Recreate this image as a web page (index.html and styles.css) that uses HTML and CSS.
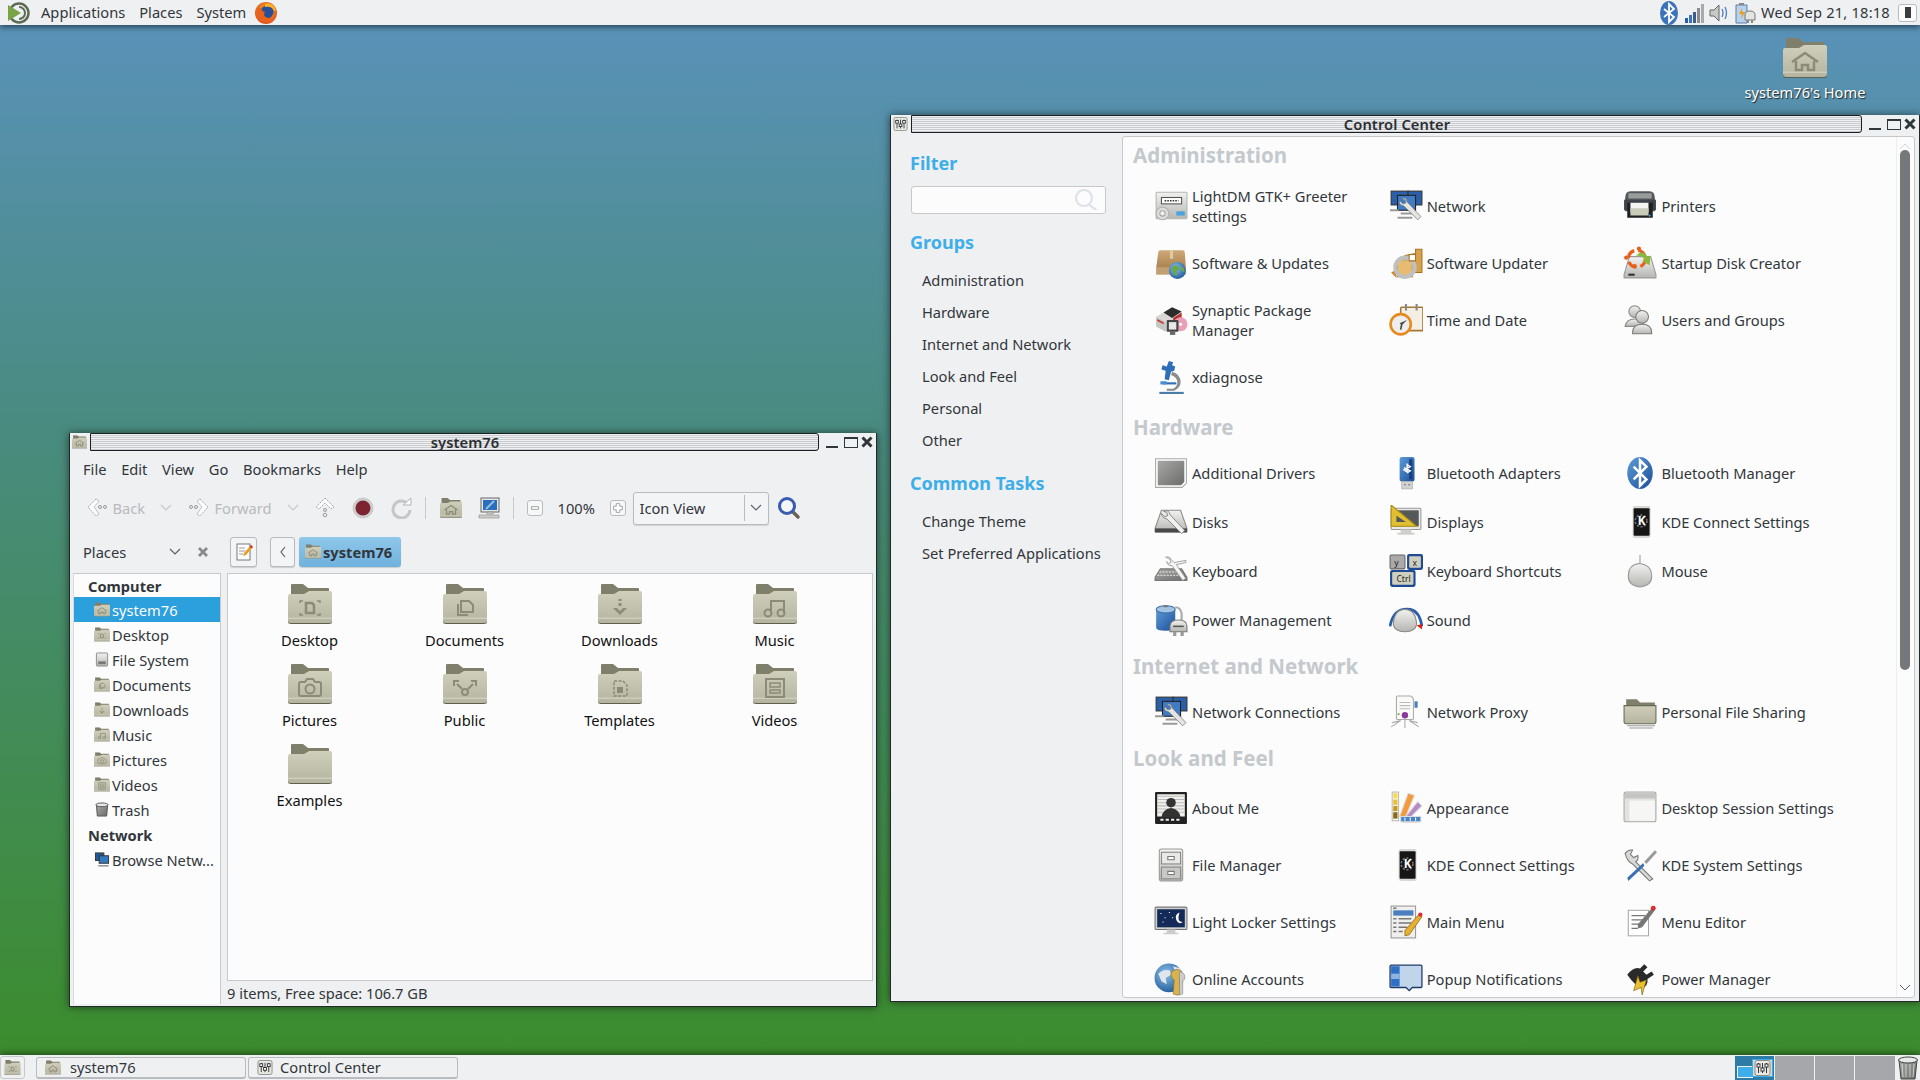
FILE: index.html
```html
<!DOCTYPE html>
<html lang="en">
  <head>
    <meta charset="UTF-8" />
    <title>Desktop</title>
    <link rel="stylesheet" href="styles.css">
  </head>
  <body>
    <svg class="defs" xmlns="http://www.w3.org/2000/svg">
      <defs>
        <linearGradient id="gFolder" x1="0" y1="0" x2="0" y2="1"><stop offset="0" stop-color="#cfcfbc"/><stop offset="1" stop-color="#b4b4a0"/></linearGradient>
        <linearGradient id="gSteel" x1="0" y1="0" x2="0" y2="1"><stop offset="0" stop-color="#f2f2f0"/><stop offset="1" stop-color="#b5b5b2"/></linearGradient>
        <linearGradient id="gDark" x1="0" y1="0" x2="1" y2="1"><stop offset="0" stop-color="#a8a8a6"/><stop offset="1" stop-color="#6c6c6a"/></linearGradient>
        <linearGradient id="gBlue" x1="0" y1="0" x2="1" y2="1"><stop offset="0" stop-color="#5c9bd8"/><stop offset="1" stop-color="#1d4f98"/></linearGradient>
        <linearGradient id="gBox" x1="0" y1="0" x2="0" y2="1"><stop offset="0" stop-color="#cfa878"/><stop offset="1" stop-color="#a98252"/></linearGradient>
        <radialGradient id="gGlobe" cx=".4" cy=".35" r=".7"><stop offset="0" stop-color="#8fc0e6"/><stop offset="1" stop-color="#1f5c9c"/></radialGradient>
        <radialGradient id="gFox" cx=".5" cy=".4" r=".6"><stop offset="0" stop-color="#f6b02a"/><stop offset="1" stop-color="#dd4f1c"/></radialGradient>

        <symbol id="folder" viewBox="0 0 44 40">
          <path d="M3 1q0-1 1-1h11l5 4h20q1 0 1 1v14H3z" fill="#7f7f6b"/>
          <path d="M0 12q0-2 2-2h14l5-3h21q2 0 2 2v27q0 3-3 3H3q-3 0-3-3z" fill="url(#gFolder)"/>
          <path d="M0 36q0 3 3 3h38q3 0 3-3v1.500q0 2.500-3 2.500H3q-3 0-3-2.500z" fill="#5f5f4e"/>
          <path d="M0 33.500h44v1.500H0z" fill="#dcdccc" opacity=".6"/>
        </symbol>
        <symbol id="f-home" viewBox="0 0 44 40"><use href="#folder"/><path d="M9 24l13-9 13 9M13 23v9h6v-5h6v5h6v-9" fill="none" stroke="#8b8b77" stroke-width="2.500"/></symbol>
        <symbol id="f-desktop" viewBox="0 0 44 40"><use href="#folder"/><path d="M12 19v-2h3M32 19v-2h-3M12 29v2h3M32 29v2h-3" fill="none" stroke="#8b8b77" stroke-width="1.500"/><path d="M18 19h6l2 2v8h-8z" fill="none" stroke="#8b8b77" stroke-width="2.500"/></symbol>
        <symbol id="f-documents" viewBox="0 0 44 40"><path d="M0 0" /><use href="#folder"/><path d="M15 20v11h10M18 17v11h12V21l-4-4z" fill="none" stroke="#8b8b77" stroke-width="2"/></symbol>
        <symbol id="f-downloads" viewBox="0 0 44 40"><use href="#folder"/><path d="M22 15v2M22 19v3" stroke="#8b8b77" stroke-width="3"/><path d="M15 24l7 7 7-7h-4l-3 3-3-3z" fill="#8b8b77"/></symbol>
        <symbol id="f-music" viewBox="0 0 44 40"><use href="#folder"/><path d="M18 29V17h13v12" fill="none" stroke="#8b8b77" stroke-width="2"/><circle cx="15" cy="29" r="3.500" fill="none" stroke="#8b8b77" stroke-width="2"/><circle cx="28" cy="29" r="3.500" fill="none" stroke="#8b8b77" stroke-width="2"/></symbol>
        <symbol id="f-pictures" viewBox="0 0 44 40"><use href="#folder"/><path d="M11 20q0-2 2-2h4l2-3h6l2 3h4q2 0 2 2v10q0 2-2 2H13q-2 0-2-2z" fill="none" stroke="#8b8b77" stroke-width="2"/><circle cx="22" cy="25" r="4.500" fill="none" stroke="#8b8b77" stroke-width="2"/></symbol>
        <symbol id="f-public" viewBox="0 0 44 40"><use href="#folder"/><circle cx="22" cy="28" r="3" fill="none" stroke="#8b8b77" stroke-width="2"/><path d="M19 25l-5-5M25 25l5-5M11 22v-5h5M33 22v-5h-5" fill="none" stroke="#8b8b77" stroke-width="2"/></symbol>
        <symbol id="f-templates" viewBox="0 0 44 40"><use href="#folder"/><path d="M16 17h9l4 4v11H16z" fill="none" stroke="#8b8b77" stroke-width="1.500" stroke-dasharray="3 1.500"/><path d="M19 23h6v6h-6z" fill="#8b8b77"/></symbol>
        <symbol id="f-videos" viewBox="0 0 44 40"><use href="#folder"/><path d="M13 15h18v18H13z" fill="none" stroke="#8b8b77" stroke-width="2"/><path d="M17 19h10v4H17zM17 26h10v3H17z" fill="none" stroke="#8b8b77" stroke-width="1.500"/></symbol>

        <symbol id="s-filesystem" viewBox="0 0 16 16"><rect x="2" y="1" width="12" height="14" rx="1" fill="url(#gSteel)" stroke="#8a8a88"/><path d="M4 10h8v3H4z" fill="#777"/></symbol>
        <symbol id="s-trash" viewBox="0 0 16 16"><path d="M2 3h12l-1 12H3z" fill="url(#gDark)" stroke="#555"/><ellipse cx="8" cy="3" rx="6.500" ry="2" fill="#e8e8e6" stroke="#555"/></symbol>
        <symbol id="s-network" viewBox="0 0 16 16"><rect x="1" y="1" width="9" height="8" fill="#1f5c9c" stroke="#333"/><rect x="5" y="4" width="10" height="8" fill="#3478c0" stroke="#333"/><path d="M4 14h11v1.500H4z" fill="#888"/></symbol>
        <symbol id="s-control" viewBox="0 0 16 16"><rect x=".5" y=".5" width="15" height="15" rx="2" fill="#e8e8e4" stroke="#8c8c86"/><path d="M4 3v10M8 3v10M12 3v10" stroke="#333"/><rect x="2.500" y="4" width="3" height="3" fill="#fff" stroke="#333"/><rect x="6.500" y="8" width="3" height="3" fill="#fff" stroke="#333"/><rect x="10.500" y="4" width="3" height="3" fill="#fff" stroke="#333"/></symbol>

        <symbol id="a-lightdm" viewBox="0 0 32 32"><rect x="2" y="3" width="29" height="25" rx="1" fill="url(#gSteel)" stroke="#b5b5b2"/><rect x="7" y="8" width="19" height="6" fill="#fff" stroke="#555"/><path d="M10 11h13" stroke="#333" stroke-width="1.500" stroke-dasharray="1.500 1"/><rect x="21" y="21" width="8" height="4" fill="#4aa3df"/><circle cx="8" cy="23" r="6" fill="#dcdcda" stroke="#b0b0ae"/><circle cx="8" cy="23" r="2.500" fill="#f2f2f0" stroke="#a8a8a6"/></symbol>
        <symbol id="a-software" viewBox="0 0 32 32"><path d="M4 6q0-2 2-2h21q2 0 2 2l1 15H2z" fill="url(#gBox)"/><path d="M2 20h28v7H2z" fill="#c2a072"/><path d="M15 4h3v8h-3z" fill="#e0c8a4"/><circle cx="22" cy="23" r="8" fill="url(#gGlobe)"/><path d="M17 20q3-3 6-1l1 3-3 2 1 4-3-1-2-4zM25 19l3 2 1 4-3-2z" fill="#6aa84a"/></symbol>
        <symbol id="a-synaptic" viewBox="0 0 32 32"><path d="M2 13L16 5l10 4v10L12 27 2 22z" fill="#d8d8d6"/><path d="M9 9l8-5 9 4-9 6z" fill="#2c2c2c"/><path d="M2 13l9 5v9l-9-5z" fill="#c6c6c4"/><path d="M18 14l8-5v7l-8 4z" fill="#b83232"/><path d="M3 15l6 3v2l-6-3z" fill="#c83c3c"/><circle cx="25" cy="20" r="6.500" fill="#e8a0b8"/><circle cx="25" cy="20" r="1.500" fill="#fff"/><rect x="12" y="16" width="11" height="11" rx="1" fill="#444"/><rect x="14" y="18" width="7" height="7" fill="#e8e8e6"/><path d="M15 27h5v3h-5z" fill="#666"/></symbol>
        <symbol id="a-xdiag" viewBox="0 0 32 32"><path d="M5 30h23v2H5z" fill="#4a7ea8"/><path d="M17 11q8 2 8 10 0 5-6 8h-7v-2h6q4-2 4-6 0-5-6-7z" fill="#8c8c8a"/><path d="M14 1l4 1-1 3 3 1-1 4-3 1-2 8-4-1 1-8-4-1 1-4 4 1z" fill="#2e6fb8"/><path d="M8 21h13v2H8z" fill="#2e6fb8"/><path d="M6 20h6v3H6z" fill="#4a90d0"/></symbol>
        <symbol id="a-network" viewBox="0 0 32 32"><rect x="2" y="2" width="16" height="13" fill="#2b5fa8" stroke="#333"/><rect x="18" y="2" width="13" height="13" fill="#2b5fa8" stroke="#333"/><rect x="8" y="6" width="17" height="14" fill="#3f7cc4" stroke="#222"/><path d="M1 19h8v2H1zM11 22h12v2H11zM8 26h14v2H8z" fill="#9a9a98"/><path d="M12 9q4-2 5 3l13 14-3 3-13-13q-5-1-4-5l3 3 3-1-1-3z" fill="#e4e4e2" stroke="#777" stroke-width=".7"/></symbol>
        <symbol id="a-updater" viewBox="0 0 32 32"><path d="M15 9l10-2V3h6v22h-8z" fill="#d8a24c" stroke="#a87420"/><path d="M8 13h14v16H8z" fill="#e8bc70" stroke="#a87420"/><path d="M2 25l5-3v8z" fill="#c88a30"/><circle cx="15" cy="20" r="9" fill="none" stroke="#c0c0be" stroke-width="4"/><path d="M19 8h6v6h-6z" fill="#fff" stroke="#a87420"/></symbol>
        <symbol id="a-time" viewBox="0 0 32 32"><rect x="11" y="4" width="21" height="22" rx="1" fill="#f4efe2" stroke="#a87830" stroke-width="1.500"/><path d="M16 1v6M26 1v6" stroke="#888" stroke-width="2"/><circle cx="11" cy="20" r="9.500" fill="#eee" stroke="#e58a1f" stroke-width="2.500"/><path d="M12 21l5-5-7 3z" fill="#444"/><path d="M12 20l-1 5" stroke="#444" stroke-width="1.500"/></symbol>
        <symbol id="a-printer" viewBox="0 0 32 32"><path d="M2 9q0-7 5-7h18q5 0 5 7v12H2z" fill="#54585c"/><path d="M5 4h22v5H5z" fill="#9a9c9c"/><path d="M1 10h30v10H1z" fill="#40444a"/><path d="M4 13h24v14H4z" fill="#1e2022"/><path d="M7 13h17v9H7z" fill="#f4f4f2"/><path d="M7 18h17v7H7z" fill="#c8ccb8"/><circle cx="25" cy="25" r="1" fill="#4aa3df"/></symbol>
        <symbol id="a-startup" viewBox="0 0 32 32"><path d="M6 10h20l5 17v3H1v-3z" fill="url(#gSteel)" stroke="#9a9a98"/><path d="M5 26h6v2H5z" fill="#333"/><circle cx="13" cy="12" r="8" fill="none" stroke="#e85e1c" stroke-width="3" stroke-dasharray="9 4"/><circle cx="15" cy="2.500" r="2" fill="#e85e1c"/><circle cx="3" cy="11" r="2" fill="#e85e1c"/><circle cx="11" cy="19" r="2" fill="#e85e1c"/><path d="M12 9q7-6 11 1l3-1-1 9-7-4 3-1q-3-4-9-4z" fill="#8ab83c"/></symbol>
        <symbol id="a-users" viewBox="0 0 32 32"><circle cx="11" cy="8" r="5.500" fill="url(#gSteel)" stroke="#8a8a88"/><path d="M2 22q1-7 9-7t9 7z" fill="url(#gSteel)" stroke="#8a8a88"/><circle cx="18" cy="13" r="6" fill="url(#gSteel)" stroke="#7a7a78"/><path d="M9 28q0-8 9-8t9 8v1H9z" fill="url(#gSteel)" stroke="#7a7a78"/></symbol>
        <symbol id="a-drivers" viewBox="0 0 32 32"><path d="M1.500 2.500h29v23l-4 4h-25z" fill="#fff" stroke="#a8a8a6"/><path d="M3.500 4.500h25v20l-3 3h-22z" fill="url(#gDark)"/></symbol>
        <symbol id="a-btadapter" viewBox="0 0 32 32"><rect x="10" y="1" width="14" height="23" rx="2" fill="url(#gBlue)"/><rect x="19" y="3" width="3" height="19" fill="#1a3f80"/><path d="M17 7v8l-3-2 6-3-3-2m0 8l3-2-6-3" fill="none" stroke="#fff" stroke-width="1.300"/><rect x="12" y="24" width="10" height="7" fill="#d2d2d0" stroke="#aaa" stroke-width=".6"/><path d="M14 27h2M18 27h2" stroke="#777"/></symbol>
        <symbol id="a-btmgr" viewBox="0 0 32 32"><ellipse cx="16" cy="16" rx="12" ry="15" fill="url(#gBlue)"/><path d="M10 10l12 12-6 6V4l6 6-12 12" fill="none" stroke="#fff" stroke-width="2.400"/></symbol>
        <symbol id="a-kde" viewBox="0 0 32 32"><rect x="9" y="1" width="17" height="30" rx="2" fill="#d8d8d6"/><rect x="10" y="3" width="15" height="26" rx="1" fill="#161616"/><circle cx="17" cy="15" r="5.500" fill="none" stroke="#777" stroke-width="1.500" stroke-dasharray="2 1.500"/><text class="svg-k" x="17.500" y="19">K</text></symbol>
        <symbol id="a-disks" viewBox="0 0 32 32"><path d="M7 5h18l6 17v3H1v-3z" fill="url(#gSteel)" stroke="#8a8a88"/><path d="M1 22h30v4H1z" fill="#48484a"/><path d="M9 6q5-2 6 3l14 15-3 3L12 13q-5-1-5-5l3 3 3-1-1-3z" fill="#f0f0ee" stroke="#777" stroke-width=".8"/></symbol>
        <symbol id="a-displays" viewBox="0 0 32 32"><rect x="2" y="3" width="28" height="20" rx="1" fill="#e8e8e6" stroke="#999"/><rect x="4" y="5" width="24" height="15" fill="#55585a"/><path d="M11 23h10v3H11zM8 26h16v2H8z" fill="#cfcfcd"/><path d="M2 0l0 20h24z" fill="#e0c030" stroke="#a88c10"/><path d="M7 10l0 6h9z" fill="#55585a"/></symbol>
        <symbol id="a-keyboard" viewBox="0 0 32 32"><path d="M6 14h20l5 8v3H1v-3z" fill="url(#gDark)" stroke="#777"/><path d="M5 17h20M3 20h25" stroke="#e8e8e6" stroke-dasharray="2 1"/><path d="M11 3q4-1 5 2l3 3 11-2v2l-9 2 9 13-3 2-10-14q-5 0-5-4l2 2 2-1-1-3z" fill="#f4f4f2" stroke="#888" stroke-width=".7"/></symbol>
        <symbol id="a-shortcuts" viewBox="0 0 32 32"><rect x="1" y="15" width="24" height="16" rx="2" fill="#1f4a94"/><rect x="3" y="17" width="20" height="12" rx="1" fill="#cfcfbf"/><text class="svg-key" x="7" y="26">Ctrl</text><rect x="1" y="1" width="14" height="13" rx="1" fill="#aaa" stroke="#666"/><text class="svg-key" x="5" y="11">y</text><rect x="17" y="0" width="15" height="15" rx="2" fill="#1f4a94"/><rect x="19" y="2" width="11" height="11" rx="1" fill="#cfcfbf"/><text class="svg-key" x="22" y="11">x</text></symbol>
        <symbol id="a-mouse" viewBox="0 0 32 32"><path d="M16 1v8" stroke="#999" fill="none"/><path d="M15 9q-10 1-10 12 0 9 11 10 11-1 11-10 0-11-12-12z" fill="url(#gSteel)" stroke="#999"/></symbol>
        <symbol id="a-power" viewBox="0 0 32 32"><path d="M2 6v17q0 3 9 3t9-3V6z" fill="url(#gBlue)"/><ellipse cx="11" cy="6" rx="9" ry="3.500" fill="#a4c2e2" stroke="#3a6ea8"/><path d="M9 2h4v2H9z" fill="#777"/><path d="M20 4q5 0 6 6v8" fill="none" stroke="#aaa" stroke-width="2"/><path d="M15 22q0-6 8-6t8 6v5H15z" fill="url(#gSteel)" stroke="#777"/><path d="M18 27h3v4h-3zM25 27h3v4h-3z" fill="#999"/><path d="M18 22h10" stroke="#555" stroke-width="1.500"/></symbol>
        <symbol id="a-sound" viewBox="0 0 32 32"><path d="M1 22Q4 4 20 6q9 2 11 16" fill="none" stroke="#2a5ea8" stroke-width="2.500"/><path d="M26 21l5-1 0 5z" fill="#e01818"/><path d="M4 20q1-14 11-14t11 14q-1 7-11 7T4 20z" fill="url(#gSteel)" stroke="#888"/></symbol>
        <symbol id="a-proxy" viewBox="0 0 32 32"><path d="M7 2q0-1 1-1h12q3 1 3 4v17q0 1-1 1H8q-1 0-1-1z" fill="#fafaf8" stroke="#aaa"/><path d="M10 7h10M10 10h10M10 13h10" stroke="#bbb"/><path d="M24 6h3v6h-3z" fill="#4a80c0"/><circle cx="15" cy="19" r="3" fill="#8a3a9a"/><path d="M15 22v9M11 24l-9 6M19 24l9 6M3 26l8-2M27 26l-8-2" stroke="#aaa"/><circle cx="9" cy="18" r="1" fill="#7ab050"/></symbol>
        <symbol id="a-sharing" viewBox="0 0 32 32"><path d="M3 4h10l3 3h14v12H3z" fill="#7f7f6b"/><path d="M1 10h30v15q0 2-2 2H3q-2 0-2-2z" fill="url(#gFolder)" stroke="#6a6a58"/><path d="M4 29h26M6 31h22" stroke="#999"/></symbol>
        <symbol id="a-about" viewBox="0 0 32 32"><rect x="1" y="1" width="30" height="30" rx="1" fill="#222"/><path d="M3 3h26v21H3z" fill="#f0f0ee"/><path d="M3 5h26M3 8h26M3 11h26M3 14h26M3 17h26M3 20h26" stroke="#bbb"/><circle cx="16" cy="11" r="4.500" fill="#333"/><path d="M7 25q1-8 9-9 8 1 9 9z" fill="#333"/><path d="M6 27h20" stroke="#eee" stroke-width="2" stroke-dasharray="3 2"/></symbol>
        <symbol id="a-appearance" viewBox="0 0 32 32"><path d="M12 30h15q2 0 3-1l-5-3H12z" fill="#ddd"/><rect x="3" y="1" width="6" height="27" fill="#fbfbf8" stroke="#bbb"/><path d="M4 2h4v5H4z" fill="#f7dc50"/><path d="M4 8h4v5H4z" fill="#e8c030"/><path d="M4 14h4v5H4z" fill="#c89a18"/><path d="M4 20h4v6H4z" fill="#8a6a10"/><path d="M10 24L18 2l6 2-9 22z" fill="#f49a3c" stroke="#ddd"/><path d="M14 26L27 10l4 4-13 13z" fill="#b48ac4" stroke="#ddd"/><path d="M11 24h19v5H11z" fill="#4a84c8" stroke="#ddd"/><path d="M15 25v3M20 25v3M25 25v3" stroke="#fff"/></symbol>
        <symbol id="a-session" viewBox="0 0 32 32"><rect x="1" y="1" width="30" height="28" rx="2" fill="#e2e2e0" stroke="#aaa"/><path d="M2 2h28v5H2z" fill="#c4c4c2"/><path d="M6 9h24v19H6z" fill="#f6f6f4"/></symbol>
        <symbol id="a-files" viewBox="0 0 32 32"><rect x="5" y="1" width="22" height="30" rx="2" fill="url(#gSteel)" stroke="#999"/><rect x="7" y="4" width="18" height="11" fill="#e8e8e6" stroke="#888"/><rect x="7" y="18" width="18" height="11" fill="#c8c8c4" stroke="#888"/><path d="M13 8h6v3h-6zM13 22h6v3h-6z" fill="#fff" stroke="#777"/></symbol>
        <symbol id="a-tools" viewBox="0 0 32 32"><path d="M2 5q3-4 7-3l-2 4 3 3 4-2q1 4-2 6l16 16-3 2L9 15Q4 13 2 5z" fill="#d8d8d6" stroke="#777"/><path d="M30 2l2 2-10 11-2-2z" fill="#999"/><path d="M19 14l-15 14 1 3 15-14z" fill="#3a70b0"/></symbol>
        <symbol id="a-locker" viewBox="0 0 32 32"><rect x="1" y="2" width="30" height="21" rx="1" fill="#cfcfcd" stroke="#777"/><rect x="3" y="4" width="26" height="17" fill="#142a58"/><path d="M24 7q-5 2-3 7t6 2q-6 0-3-9z" fill="#fff"/><path d="M6 8h1M10 12h1M14 7h1M8 16h1M17 12h1" stroke="#fff"/><path d="M12 23h8v3h-8zM9 26h14v1.500H9z" fill="#ccc"/></symbol>
        <symbol id="a-menu" viewBox="0 0 32 32"><rect x="2" y="1" width="23" height="30" fill="#efefed" stroke="#999"/><path d="M4 5h19v5H4z" fill="#4a80c0"/><path d="M4 3h3M4 13h3M4 17h3M4 21h3M4 25h3M9 13h12M9 17h12M9 21h8M9 25h4" stroke="#777" stroke-width="1.500"/><path d="M28 9l3 2-12 17-4 1 0-5z" fill="#e8b030" stroke="#8a6010" stroke-width=".7"/><circle cx="29.500" cy="9" r="2" fill="#d83030"/></symbol>
        <symbol id="a-editor" viewBox="0 0 32 32"><rect x="5" y="5" width="19" height="24" fill="#fff" stroke="#aaa"/><path d="M8 10h13M8 14h13M8 18h9M8 22h6" stroke="#777" stroke-width="1.300"/><path d="M27 3l3 2-12 16-4 1 0-4z" fill="#777"/><circle cx="28.500" cy="3" r="2.300" fill="#d83030"/></symbol>
        <symbol id="a-online" viewBox="0 0 32 32"><circle cx="14" cy="15" r="13.500" fill="url(#gGlobe)"/><path d="M4 11q5-5 11-3l1 4-5 3 1 6-5-3zM18 4l7 2 1 8-5-2z" fill="#dfe6ec"/><path d="M21 7q-5 1-5 5 0 3 3 5l-1 13 3 1h3V15q2-2 2-4 0-4-5-4z" fill="#d8b24c" stroke="#8a6a20" stroke-width=".6"/><path d="M24 9q5 1 5 5 0 3-2 4v12l-3 1z" fill="#ccc" stroke="#888" stroke-width=".6"/></symbol>
        <symbol id="a-popup" viewBox="0 0 32 32"><path d="M2 3h28q1 0 1 1v19q0 1-1 1h-8l-3 3-3-3H2q-1 0-1-1V4q0-1 1-1z" fill="#c0d4ea" stroke="#1e3a6a" stroke-width="1.200"/><path d="M2 4h8v19H2z" fill="#2f6fc6"/><path d="M2 11h8v5H2z" fill="#8eb4e0"/></symbol>
        <symbol id="a-powermgr" viewBox="0 0 32 32"><path d="M4 12q6-8 12-6l4-4 3 3-4 4 3 3 5-3 2 3-6 4q1 6-5 9-7-3-14-13z" fill="#2a2a2a"/><path d="M14 13l-4 14 7-3 1 7 4-14-6 2z" fill="#e8c030" stroke="#7a6210" stroke-width=".6"/></symbol>
      </defs>
    </svg>

    <div class="desktop">
      <div class="top-panel">
        <svg class="menu-logo" viewBox="0 0 22 22"><circle cx="11" cy="11" r="9.500" fill="none" stroke="#5d6b54" stroke-width="2.500"/><path d="M11 5a6 6 0 0 1 0 12" fill="none" stroke="#5d6b54" stroke-width="2"/><path d="M0 3l13 8-13 8z" fill="#79a446"/></svg>
        <span class="panel-item">Applications</span>
        <span class="panel-item">Places</span>
        <span class="panel-item">System</span>
        <svg class="firefox" viewBox="0 0 22 22"><circle cx="11" cy="11" r="11" fill="url(#gFox)"/><circle cx="12" cy="10" r="6.500" fill="#2a4f96"/><path d="M3 5q-3 11 7 15 8 2 11-6-3 3-8 2-6-2-3-6-2 0-3-2-1 0-1-2-2 0-3-1z" fill="#e8621c"/><path d="M10 2q8-2 11 6-1 1-2 1-2-5-9-4z" fill="#f6b02a"/></svg>
        <div class="tray">
          <svg class="tray-bt" viewBox="0 0 18 24"><ellipse cx="9" cy="12" rx="9" ry="12" fill="#3b74b8"/><path d="M4 8l10 8-5 5V3l5 5-10 8" fill="none" stroke="#fff" stroke-width="1.800"/></svg>
          <svg class="tray-signal" viewBox="0 0 20 20"><path d="M0 15h3v5H0z" fill="#2a5ea8"/><path d="M4 12h3v8H4z" fill="#3b74b8"/><path d="M8 9h3v11H8z" fill="#3b5f88"/><path d="M12 5h3v15h-3z" fill="#8a8c8e"/><path d="M16 1h3v19h-3z" fill="#a8aaac"/></svg>
          <svg class="tray-sound" viewBox="0 0 19 20"><path d="M1 7h4l5-5v16l-5-5H1z" fill="#c8c8c6" stroke="#666"/><path d="M13 6q2 4 0 8M16 4q3 6 0 12" fill="none" stroke="#4a80c0" stroke-width="1.300"/></svg>
          <svg class="tray-power" viewBox="0 0 22 22"><path d="M2 3h11v18H2z" fill="#b9d2ec" stroke="#5a7ea8"/><path d="M5 1h5v2H5z" fill="#888"/><path d="M8 6l-3 6h3l-1 5 4-7H8z" fill="#e8a020"/><path d="M11 13q0-4 5-4t5 4v5H11z" fill="#e4e4e2" stroke="#777"/><path d="M13 18h2v3h-2zM17 18h2v3h-2z" fill="#888"/></svg>
          <span class="clock">Wed Sep 21, 18:18</span>
          <span class="kde-tray"><span class="kde-tray-dot"></span></span>
        </div>
      </div>

      <div class="home-icon">
        <svg class="folder-big"><use href="#f-home"/></svg>
        <span class="home-label">system76's Home</span>
      </div>

      <div class="window window-files">
        <div class="titlebar">
          <svg class="title-icon"><use href="#f-home"/></svg>
          <div class="title-stripe"><span class="title-text">system76</span></div>
          <div class="wm-buttons">
            <span class="wm-min"></span><span class="wm-max"></span>
            <svg class="wm-close" viewBox="0 0 12 12"><path d="M1.500 1.500l9 9M10.500 1.500l-9 9" stroke="#31363b" stroke-width="3"/></svg>
          </div>
        </div>
        <div class="menubar">
          <span>File</span><span>Edit</span><span>View</span><span>Go</span><span>Bookmarks</span><span>Help</span>
        </div>
        <div class="toolbar">
          <svg class="tb-icon" viewBox="0 0 22 22"><path d="M10 2L2 10l8 9 3-2-5-7 5-6z" fill="#fff" stroke="#9a9c9e" stroke-dasharray="1.500 1"/><circle cx="14" cy="10" r="1.500" fill="none" stroke="#999"/><circle cx="19" cy="10" r="1.500" fill="none" stroke="#999"/></svg>
          <span class="tb-label tb-back">Back</span>
          <svg class="tb-chev" viewBox="0 0 14 8"><path d="M2 1l5 5 5-5" fill="none" stroke="#c6c8ca" stroke-width="1.200"/></svg>
          <svg class="tb-icon tb-forward" viewBox="0 0 22 22"><path d="M12 2l8 8-8 9-3-2 5-7-5-6z" fill="#fff" stroke="#9a9c9e" stroke-dasharray="1.500 1"/><circle cx="8" cy="10" r="1.500" fill="none" stroke="#999"/><circle cx="3" cy="10" r="1.500" fill="none" stroke="#999"/></svg>
          <span class="tb-label tb-fwd-label">Forward</span>
          <svg class="tb-chev" viewBox="0 0 14 8"><path d="M2 1l5 5 5-5" fill="none" stroke="#c6c8ca" stroke-width="1.200"/></svg>
          <svg class="tb-icon tb-up" viewBox="0 0 22 22"><path d="M11 1l9 9-3 2-6-6-6 6-3-2z" fill="#fff" stroke="#9a9c9e" stroke-dasharray="1.500 1"/><circle cx="11" cy="13" r="1.500" fill="none" stroke="#999"/><circle cx="11" cy="18" r="1.800" fill="none" stroke="#999"/></svg>
          <svg class="tb-icon tb-gap" viewBox="0 0 22 22"><circle cx="11" cy="11" r="10" fill="#ccc" stroke="#bbb" stroke-dasharray="1.500 1"/><circle cx="11" cy="11" r="7.500" fill="#7e2430"/></svg>
          <svg class="tb-icon tb-gap" viewBox="0 0 22 22"><path d="M18 7a8.500 8.500 0 1 0 2 6" fill="none" stroke="#c4c6c8" stroke-width="3"/><path d="M13 8h8V1z" fill="#fff" stroke="#b0b2b4"/></svg>
          <span class="tb-sep tb-sep1"></span>
          <svg class="tb-icon tb-home"><use href="#f-home"/></svg>
          <svg class="tb-icon tb-gap" viewBox="0 0 22 22"><rect x="3" y="1" width="18" height="14" fill="#e8e8e6" stroke="#666"/><path d="M5 3h14v10H5z" fill="#2b6fbc"/><path d="M8 12l8-8" stroke="#8fc0e6" stroke-width="2"/><path d="M9 15h6v2H9zM1 18h20v3H1z" fill="#cfcfcd" stroke="#888" stroke-width=".6"/></svg>
          <span class="tb-sep tb-sep2"></span>
          <span class="zoom-btn zoom-minus"><svg viewBox="0 0 16 16"><path d="M4 6.500h8v3H4z" fill="#fff" stroke="#999"/></svg></span>
          <span class="zoom-level">100%</span>
          <span class="zoom-btn"><svg viewBox="0 0 16 16"><path d="M6 3h4v3h3v4h-3v3H6v-3H3V6h3z" fill="#fff" stroke="#999"/></svg></span>
          <span class="view-combo"><span class="view-name">Icon View</span><span class="view-arrow"><svg viewBox="0 0 14 8"><path d="M2 1l5 5 5-5" fill="none" stroke="#5b6066" stroke-width="1.100"/></svg></span></span>
          <svg class="tb-search" viewBox="0 0 24 24"><path d="M15 15l6 6" stroke="#6a6258" stroke-width="3.500" stroke-linecap="round"/><circle cx="10" cy="10" r="7.500" fill="#f4f6f8" stroke="#3a5cb0" stroke-width="3"/></svg>
        </div>
        <div class="locationbar">
          <div class="places-select">
            <span class="places-name">Places</span>
            <svg class="places-chev" viewBox="0 0 14 8"><path d="M2 1l5 5 5-5" fill="none" stroke="#5b6066" stroke-width="1.200"/></svg>
            <svg class="places-x" viewBox="0 0 12 12"><path d="M2 2l8 8M10 2l-8 8" stroke="#888a8c" stroke-width="2.800"/></svg>
          </div>
          <span class="loc-btn"><svg viewBox="0 0 20 20"><rect x="3" y="2" width="13" height="16" fill="#fff" stroke="#777"/><path d="M5 6h6M5 9h6M5 12h4" stroke="#999"/><path d="M17 3l2 2-7 8-3 1 1-3z" fill="#e8a020"/><path d="M17 3l2 2-1.500 1.500-2-2z" fill="#d83030"/></svg></span>
          <span class="loc-btn loc-back"><svg viewBox="0 0 8 14"><path d="M6 2L2 7l4 5" fill="none" stroke="#5b6066" stroke-width="1.200"/></svg></span>
          <span class="path-btn"><svg class="path-icon"><use href="#f-home"/></svg>system76</span>
        </div>
        <div class="files-body">
          <div class="side-pane">
            <div class="side-head">Computer</div>
            <div class="side-row side-selected"><svg class="side-icon"><use href="#f-home"/></svg>system76</div>
            <div class="side-row"><svg class="side-icon"><use href="#f-desktop"/></svg>Desktop</div>
            <div class="side-row"><svg class="side-icon"><use href="#s-filesystem"/></svg>File System</div>
            <div class="side-row"><svg class="side-icon"><use href="#f-documents"/></svg>Documents</div>
            <div class="side-row"><svg class="side-icon"><use href="#f-downloads"/></svg>Downloads</div>
            <div class="side-row"><svg class="side-icon"><use href="#f-music"/></svg>Music</div>
            <div class="side-row"><svg class="side-icon"><use href="#f-pictures"/></svg>Pictures</div>
            <div class="side-row"><svg class="side-icon"><use href="#f-videos"/></svg>Videos</div>
            <div class="side-row"><svg class="side-icon"><use href="#s-trash"/></svg>Trash</div>
            <div class="side-head">Network</div>
            <div class="side-row"><svg class="side-icon"><use href="#s-network"/></svg>Browse Netw...</div>
          </div>
          <div class="files-right">
            <div class="icon-view">
              <div class="file"><svg class="folder-big"><use href="#f-desktop"/></svg><span>Desktop</span></div>
              <div class="file"><svg class="folder-big"><use href="#f-documents"/></svg><span>Documents</span></div>
              <div class="file"><svg class="folder-big"><use href="#f-downloads"/></svg><span>Downloads</span></div>
              <div class="file"><svg class="folder-big"><use href="#f-music"/></svg><span>Music</span></div>
              <div class="file"><svg class="folder-big"><use href="#f-pictures"/></svg><span>Pictures</span></div>
              <div class="file"><svg class="folder-big"><use href="#f-public"/></svg><span>Public</span></div>
              <div class="file"><svg class="folder-big"><use href="#f-templates"/></svg><span>Templates</span></div>
              <div class="file"><svg class="folder-big"><use href="#f-videos"/></svg><span>Videos</span></div>
              <div class="file"><svg class="folder-big"><use href="#folder"/></svg><span>Examples</span></div>
            </div>
            <div class="statusbar">9 items, Free space: 106.7 GB</div>
          </div>
        </div>
      </div>

      <div class="window window-control">
        <div class="titlebar">
          <svg class="title-icon"><use href="#s-control"/></svg>
          <div class="title-stripe"><span class="title-text">Control Center</span></div>
          <div class="wm-buttons">
            <span class="wm-min"></span><span class="wm-max"></span>
            <svg class="wm-close" viewBox="0 0 12 12"><path d="M1.500 1.500l9 9M10.500 1.500l-9 9" stroke="#31363b" stroke-width="3"/></svg>
          </div>
        </div>
        <div class="control-body">
          <div class="control-side">
            <h3 class="side-title title-filter">Filter</h3>
            <div class="filter-box"><svg viewBox="0 0 28 22"><circle cx="12" cy="9" r="8" fill="none" stroke="#dfe1ea" stroke-width="2.200"/><path d="M18 15l8 6h-4l-6-5z" fill="#dfe1ea"/></svg></div>
            <h3 class="side-title title-groups">Groups</h3>
            <a class="side-link">Administration</a>
            <a class="side-link">Hardware</a>
            <a class="side-link">Internet and Network</a>
            <a class="side-link">Look and Feel</a>
            <a class="side-link">Personal</a>
            <a class="side-link">Other</a>
            <h3 class="side-title title-tasks">Common Tasks</h3>
            <a class="side-link">Change Theme</a>
            <a class="side-link">Set Preferred Applications</a>
          </div>
          <div class="control-main">
            <div class="scroller">
              <h2 class="group-title group-first">Administration</h2>
              <div class="apps apps-tall">
                <div class="app"><svg><use href="#a-lightdm"/></svg><span>LightDM GTK+ Greeter settings</span></div>
                <div class="app"><svg><use href="#a-network"/></svg><span>Network</span></div>
                <div class="app"><svg><use href="#a-printer"/></svg><span>Printers</span></div>
                <div class="app"><svg><use href="#a-software"/></svg><span>Software &amp; Updates</span></div>
                <div class="app"><svg><use href="#a-updater"/></svg><span>Software Updater</span></div>
                <div class="app"><svg><use href="#a-startup"/></svg><span>Startup Disk Creator</span></div>
                <div class="app"><svg><use href="#a-synaptic"/></svg><span>Synaptic Package Manager</span></div>
                <div class="app"><svg><use href="#a-time"/></svg><span>Time and Date</span></div>
                <div class="app"><svg><use href="#a-users"/></svg><span>Users and Groups</span></div>
                <div class="app"><svg><use href="#a-xdiag"/></svg><span>xdiagnose</span></div>
              </div>
              <h2 class="group-title">Hardware</h2>
              <div class="apps">
                <div class="app"><svg><use href="#a-drivers"/></svg><span>Additional Drivers</span></div>
                <div class="app"><svg><use href="#a-btadapter"/></svg><span>Bluetooth Adapters</span></div>
                <div class="app"><svg><use href="#a-btmgr"/></svg><span>Bluetooth Manager</span></div>
                <div class="app"><svg><use href="#a-disks"/></svg><span>Disks</span></div>
                <div class="app"><svg><use href="#a-displays"/></svg><span>Displays</span></div>
                <div class="app"><svg><use href="#a-kde"/></svg><span>KDE Connect Settings</span></div>
                <div class="app"><svg><use href="#a-keyboard"/></svg><span>Keyboard</span></div>
                <div class="app"><svg><use href="#a-shortcuts"/></svg><span>Keyboard Shortcuts</span></div>
                <div class="app"><svg><use href="#a-mouse"/></svg><span>Mouse</span></div>
                <div class="app"><svg><use href="#a-power"/></svg><span>Power Management</span></div>
                <div class="app"><svg><use href="#a-sound"/></svg><span>Sound</span></div>
              </div>
              <h2 class="group-title">Internet and Network</h2>
              <div class="apps">
                <div class="app"><svg><use href="#a-network"/></svg><span>Network Connections</span></div>
                <div class="app"><svg><use href="#a-proxy"/></svg><span>Network Proxy</span></div>
                <div class="app"><svg><use href="#a-sharing"/></svg><span>Personal File Sharing</span></div>
              </div>
              <h2 class="group-title">Look and Feel</h2>
              <div class="apps apps-tall">
                <div class="app"><svg><use href="#a-about"/></svg><span>About Me</span></div>
                <div class="app"><svg><use href="#a-appearance"/></svg><span>Appearance</span></div>
                <div class="app"><svg><use href="#a-session"/></svg><span>Desktop Session Settings</span></div>
                <div class="app"><svg><use href="#a-files"/></svg><span>File Manager</span></div>
                <div class="app"><svg><use href="#a-kde"/></svg><span>KDE Connect Settings</span></div>
                <div class="app"><svg><use href="#a-tools"/></svg><span>KDE System Settings</span></div>
                <div class="app"><svg><use href="#a-locker"/></svg><span>Light Locker Settings</span></div>
                <div class="app"><svg><use href="#a-menu"/></svg><span>Main Menu</span></div>
                <div class="app"><svg><use href="#a-editor"/></svg><span>Menu Editor</span></div>
                <div class="app"><svg><use href="#a-online"/></svg><span>Online Accounts</span></div>
                <div class="app"><svg><use href="#a-popup"/></svg><span>Popup Notifications</span></div>
                <div class="app"><svg><use href="#a-powermgr"/></svg><span>Power Manager</span></div>
              </div>
            </div>
            <div class="scrollbar">
              <svg class="scroll-arrow" viewBox="0 0 12 8"><path d="M1 7l5-5 5 5" fill="none" stroke="#d4d6d8"/></svg>
              <div class="scroll-track"><div class="scroll-thumb"></div></div>
              <svg class="scroll-arrow" viewBox="0 0 12 8"><path d="M1 1l5 5 5-5" fill="none" stroke="#5b6066"/></svg>
            </div>
          </div>
        </div>
      </div>

      <div class="bottom-panel">
        <span class="show-desktop"><svg><use href="#f-desktop"/></svg></span>
        <span class="task task-first"><svg><use href="#f-home"/></svg>system76</span>
        <span class="task"><svg><use href="#s-control"/></svg>Control Center</span>
        <div class="pager">
          <div class="pager-cell pager-active">
            <span class="pager-desk"></span>
            <span class="pager-win"><svg><use href="#s-control"/></svg></span>
          </div>
          <div class="pager-cell"></div>
          <div class="pager-cell"></div>
          <div class="pager-cell"></div>
        </div>
        <svg class="panel-trash" viewBox="0 0 20 24"><path d="M1 4h18l-2 19H3z" fill="url(#gDark)" stroke="#444"/><path d="M4 8l1 13M8 8v13M12 8v13M16 8l-1 13" stroke="#ddd" stroke-width=".8"/><ellipse cx="10" cy="4" rx="9.500" ry="3" fill="#e8e8e6" stroke="#444"/></svg>
      </div>
    </div>
  </body>
</html>
```

FILE: styles.css
```css
* {
  box-sizing: border-box;
}
html,
body {
  margin: 0;
  padding: 0;
}
body {
  width: 1920px;
  height: 1080px;
  overflow: hidden;
  font-family: "Noto Sans", "Open Sans", sans-serif;
  font-size: 14.670px;
  color: #31363b;
}
svg {
  display: block;
}
.defs {
  position: absolute;
  width: 0;
  height: 0;
}
.svg-k {
  font-family: "Noto Sans", sans-serif;
  font-size: 11px;
  font-weight: 700;
  text-anchor: middle;
  fill: #fff;
}
.svg-key {
  font-family: "Noto Sans", sans-serif;
  font-size: 8px;
  fill: #222;
}

.desktop {
  position: relative;
  width: 1920px;
  height: 1080px;
  display: flex;
  flex-direction: column;
  justify-content: space-between;
  background: linear-gradient(#5a92bb, #498b7f 40%, #3b8c2a);
}

/* top panel */
.top-panel {
  display: flex;
  align-items: center;
  gap: 14px;
  height: 25px;
  padding-left: 8px;
  background: #eff0f1;
  box-shadow: 0 2px 6px rgba(0, 0, 0, 0.55);
  z-index: 3;
}
.menu-logo {
  width: 22px;
  height: 22px;
  margin-right: -3px;
}
.panel-item {
  color: #31363b;
  margin-top: -2px;
}
.firefox {
  width: 22px;
  height: 22px;
  margin-left: -5px;
}
.tray {
  display: flex;
  align-items: center;
  margin-left: auto;
  padding-right: 3px;
}
.tray-bt {
  width: 18px;
  height: 24px;
}
.tray-signal {
  width: 20px;
  height: 20px;
  margin-left: 7px;
}
.tray-sound {
  width: 19px;
  height: 20px;
  margin-left: 4px;
}
.tray-power {
  width: 22px;
  height: 22px;
  margin-left: 6px;
}
.clock {
  margin-left: 5px;
  margin-top: -2px;
  width: 137px;
  white-space: nowrap;
  letter-spacing: 0.2px;
}
.kde-tray {
  display: flex;
  align-items: center;
  justify-content: center;
  width: 19px;
  height: 18px;
  border: 1px solid #b9bcbf;
  border-radius: 3px;
  background: #fcfcfc;
}
.kde-tray-dot {
  width: 6px;
  height: 11px;
  background: #3a3c3e;
}

/* desktop icon */
.home-icon {
  position: absolute;
  top: 38px;
  left: 1730px;
  width: 150px;
  display: flex;
  flex-direction: column;
  align-items: center;
  gap: 4px;
  color: #fff;
  text-shadow: 1px 1px 1px #222;
}
.folder-big {
  width: 44px;
  height: 40px;
}

/* windows */
.window {
  position: absolute;
  display: flex;
  flex-direction: column;
  background: #eff0f1;
  border: 1px solid #24282c;
  border-top: 0;
  box-shadow: 0 0 8px rgba(0, 0, 0, 0.55);
}
.window-files {
  left: 69px;
  top: 433px;
  width: 808px;
  height: 574px;
}
.window-control {
  left: 890px;
  top: 115px;
  width: 1030px;
  height: 887px;
}
.titlebar {
  display: flex;
  align-items: flex-start;
  height: 20px;
  flex: none;
  padding-left: 2px;
}
.title-icon {
  width: 15px;
  height: 14px;
  margin-top: 2px;
}
.title-stripe {
  flex: 1;
  height: 18px;
  margin-left: 3px;
  padding-left: 21px;
  display: flex;
  align-items: center;
  justify-content: center;
  border: 1px solid #1c1f22;
  border-radius: 0 3px 3px 0;
  background: repeating-linear-gradient(#eff0f1 0, #eff0f1 1px, #c9cbce 1px, #c9cbce 2px);
}
.title-text {
  font-weight: 600;
  line-height: 16px;
  letter-spacing: 0.1px;
  color: #2a2e32;
}
.wm-buttons {
  display: flex;
  align-items: center;
  width: 57px;
  height: 18px;
  flex: none;
  padding-left: 7px;
}
.wm-min {
  width: 12px;
  height: 2px;
  margin-top: 10px;
  background: #31363b;
}
.wm-max {
  width: 14px;
  height: 11px;
  margin-left: 6px;
  margin-top: 1px;
  border: 1px solid #31363b;
  border-top-width: 2px;
}
.wm-close {
  width: 12px;
  height: 12px;
  margin-left: 3px;
}

/* file manager */
.menubar {
  display: flex;
  align-items: center;
  gap: 14.700px;
  height: 33px;
  padding-left: 13px;
  padding-bottom: 2px;
  flex: none;
}
.toolbar {
  display: flex;
  align-items: center;
  height: 44px;
  padding-left: 15.500px;
  flex: none;
}
.tb-icon {
  width: 22px;
  height: 22px;
  flex: none;
}
.tb-label {
  color: #b8babd;
  margin-left: 5px;
  white-space: nowrap;
}
.tb-back {
  width: 33px;
}
.tb-fwd-label {
  width: 58px;
}
.tb-chev {
  width: 14px;
  height: 8px;
  margin-left: 13px;
}
.tb-forward {
  margin-left: 15px;
}
.tb-up {
  margin-left: 14px;
}
.tb-gap {
  margin-left: 16px;
}
.tb-sep {
  width: 1px;
  height: 22px;
  background: #c6c8ca;
  flex: none;
}
.tb-sep1 {
  margin-left: 13px;
}
.tb-sep2 {
  margin-left: 13px;
}
.tb-home {
  margin-left: 14px;
  height: 20px;
}
.zoom-btn {
  width: 16px;
  height: 16px;
  margin-left: 13px;
  border: 1px solid #b9bcbf;
  border-radius: 3px;
  background: #f6f7f7;
  flex: none;
}
.zoom-level {
  width: 40px;
  margin-left: 15px;
  margin-right: -1px;
  white-space: nowrap;
}
.view-combo {
  display: flex;
  align-items: center;
  width: 136px;
  height: 33px;
  margin-left: 7px;
  border: 1px solid #b9bcbf;
  border-radius: 3px;
  background: #f3f4f5;
  box-shadow: 0 1px 1px rgba(0, 0, 0, 0.12);
}
.view-name {
  flex: 1;
  padding-left: 6px;
}
.view-arrow {
  display: flex;
  align-items: center;
  justify-content: center;
  width: 24px;
  height: 26px;
  border-left: 1px solid #b9bcbf;
}
.view-arrow svg {
  width: 14px;
  height: 8px;
}
.tb-search {
  width: 24px;
  height: 24px;
  margin-left: 8px;
}
.locationbar {
  display: flex;
  align-items: center;
  height: 42px;
  flex: none;
  padding-left: 13px;
  padding-top: 1px;
}
.places-select {
  display: flex;
  align-items: center;
  width: 147px;
}
.places-name {
  width: 85px;
}
.places-chev {
  width: 14px;
  height: 8px;
}
.places-x {
  width: 12px;
  height: 12px;
  margin-left: 15px;
}
.loc-btn {
  display: flex;
  align-items: center;
  justify-content: center;
  width: 27px;
  height: 30px;
  border: 1px solid #b9bcbf;
  border-radius: 3px;
  background: #f3f4f5;
  box-shadow: 0 1px 1px rgba(0, 0, 0, 0.15);
}
.loc-btn svg {
  width: 20px;
  height: 20px;
}
.loc-back {
  width: 25px;
  margin-left: 13px;
}
.loc-back svg {
  width: 8px;
  height: 14px;
}
.path-btn {
  display: flex;
  align-items: center;
  gap: 2px;
  width: 102px;
  height: 30px;
  margin-left: 4px;
  padding-left: 6px;
  border-radius: 3px;
  background: linear-gradient(#8fc8ea, #6fb1dd);
  box-shadow: 0 1px 1px rgba(0, 0, 0, 0.15);
  font-weight: 700;
}
.path-icon {
  width: 16px;
  height: 15px;
}
.files-body {
  display: flex;
  flex: 1;
  min-height: 0;
  padding: 1px 3px 2px 3px;
  gap: 6px;
}
.side-pane {
  width: 148px;
  flex: none;
  border: 1px solid #c6c8ca;
  border-bottom: 0;
  border-left-color: #d8dadc;
  background: #fcfcfc;
}
.side-head {
  display: flex;
  align-items: center;
  height: 25px;
  padding-left: 14px;
  font-weight: 700;
}
.side-head:first-child {
  height: 23px;
}
.side-row {
  display: flex;
  align-items: center;
  height: 25px;
  padding-left: 20px;
  gap: 2px;
  white-space: nowrap;
}
.side-selected {
  background: #2c9fdd;
  color: #fcfcfc;
}
.side-icon {
  width: 16px;
  height: 15px;
  flex: none;
}
.files-right {
  display: flex;
  flex-direction: column;
  flex: 1;
  min-width: 0;
}
.icon-view {
  flex: 1;
  display: grid;
  grid-template-columns: repeat(4, 155px);
  grid-auto-rows: 80px;
  justify-content: start;
  padding-top: 10px;
  padding-left: 4px;
  border: 1px solid #c6c8ca;
  background: #fcfcfc;
}
.file {
  display: flex;
  flex-direction: column;
  align-items: center;
  gap: 6px;
  color: #111;
}
.statusbar {
  height: 23px;
  flex: none;
  display: flex;
  align-items: center;
  padding-top: 1px;
}

/* control center */
.control-body {
  display: flex;
  flex: 1;
  min-height: 0;
}
.control-side {
  width: 231px;
  flex: none;
  display: flex;
  flex-direction: column;
  padding: 2px 0 0 19px;
}
.side-title {
  margin: 0;
  font-size: 18px;
  line-height: 24px;
  font-weight: 700;
  color: #3daee9;
}
.title-filter {
  margin-top: 14px;
}
.title-groups {
  margin-top: 16px;
  margin-bottom: 10px;
}
.title-tasks {
  margin-top: 15px;
  margin-bottom: 10px;
}
.filter-box {
  display: flex;
  align-items: center;
  justify-content: flex-end;
  width: 195px;
  height: 28px;
  margin-top: 11px;
  margin-left: 1px;
  padding-right: 5px;
  border: 1px solid #c6c8ca;
  border-radius: 3px;
  background: #fcfcfc;
}
.filter-box svg {
  width: 28px;
  height: 22px;
}
.side-link {
  display: flex;
  align-items: center;
  height: 32px;
  padding-left: 12px;
}
.control-main {
  display: flex;
  flex: 1;
  min-width: 0;
  height: 862px;
  margin: 1px 4px 0 0;
  border: 1px solid #c6c8ca;
  border-radius: 3px;
  background: #fcfcfc;
  overflow: hidden;
}
.scroller {
  flex: 1;
  min-width: 0;
  overflow: hidden;
}
.group-title {
  display: flex;
  align-items: center;
  margin: 0;
  height: 43px;
  padding-left: 10px;
  font-size: 20.500px;
  font-weight: 700;
  color: #c4c9cd;
}
.group-first {
  height: 40px;
  padding-bottom: 4px;
}
.apps {
  display: grid;
  grid-template-columns: repeat(3, 234.700px);
  grid-auto-rows: 49px;
  padding-left: 32px;
}
.apps-tall {
  grid-auto-rows: 57px;
}
.app {
  display: flex;
  align-items: center;
  gap: 5px;
  line-height: 20px;
}
.app svg {
  width: 34px;
  height: 34px;
  margin: 0 -1px;
  flex: none;
}
.app span {
  max-width: 176px;
}
.scrollbar {
  display: flex;
  flex-direction: column;
  align-items: center;
  width: 16px;
  flex: none;
  margin-right: 2px;
  padding: 5px 0;
  border-left: 1px solid #eceef0;
}
.scroll-arrow {
  width: 12px;
  height: 8px;
  flex: none;
}
.scroll-track {
  flex: 1;
  width: 10px;
}
.scroll-thumb {
  width: 10px;
  height: 520px;
  border-radius: 5px;
  background: #76777b;
}

/* bottom panel */
.bottom-panel {
  display: flex;
  align-items: center;
  height: 25px;
  background: #eff0f1;
  box-shadow: 0 -2px 6px rgba(0, 0, 0, 0.45);
  z-index: 3;
}
.show-desktop {
  display: flex;
  align-items: center;
  justify-content: center;
  width: 25px;
  height: 23px;
  border: 1px solid #c6c8ca;
  border-radius: 3px;
}
.show-desktop svg {
  width: 17px;
  height: 15px;
}
.task {
  display: flex;
  align-items: center;
  gap: 7px;
  width: 210px;
  height: 22px;
  margin-left: 2px;
  padding-left: 8px;
  border: 1px solid #b9bcbf;
  border-bottom-width: 2px;
  border-radius: 3px;
}
.task svg {
  width: 16px;
  height: 15px;
}
.task-first {
  margin-left: 11px;
  gap: 9px;
}
.pager {
  display: flex;
  height: 24px;
  margin-top: 1px;
  margin-left: auto;
}
.pager-cell {
  width: 40px;
  background: #a5a7ab;
  border-right: 1px solid #eff0f1;
}
.pager-cell:last-child {
  border-right: 0;
}
.pager-active {
  position: relative;
  background: #2e7ca6;
}
.pager-desk {
  position: absolute;
  left: 2px;
  bottom: 2px;
  width: 16px;
  height: 12px;
  border: 1px solid #eff0f1;
  background: #3daee9;
}
.pager-win {
  position: absolute;
  right: 1px;
  top: 3px;
  width: 21px;
  height: 18px;
  border: 1px solid #3daee9;
  background: #d8d8d4;
}
.pager-win svg {
  width: 19px;
  height: 16px;
}
.panel-trash {
  width: 20px;
  height: 24px;
  margin: 0 2px 0 3px;
}
```
